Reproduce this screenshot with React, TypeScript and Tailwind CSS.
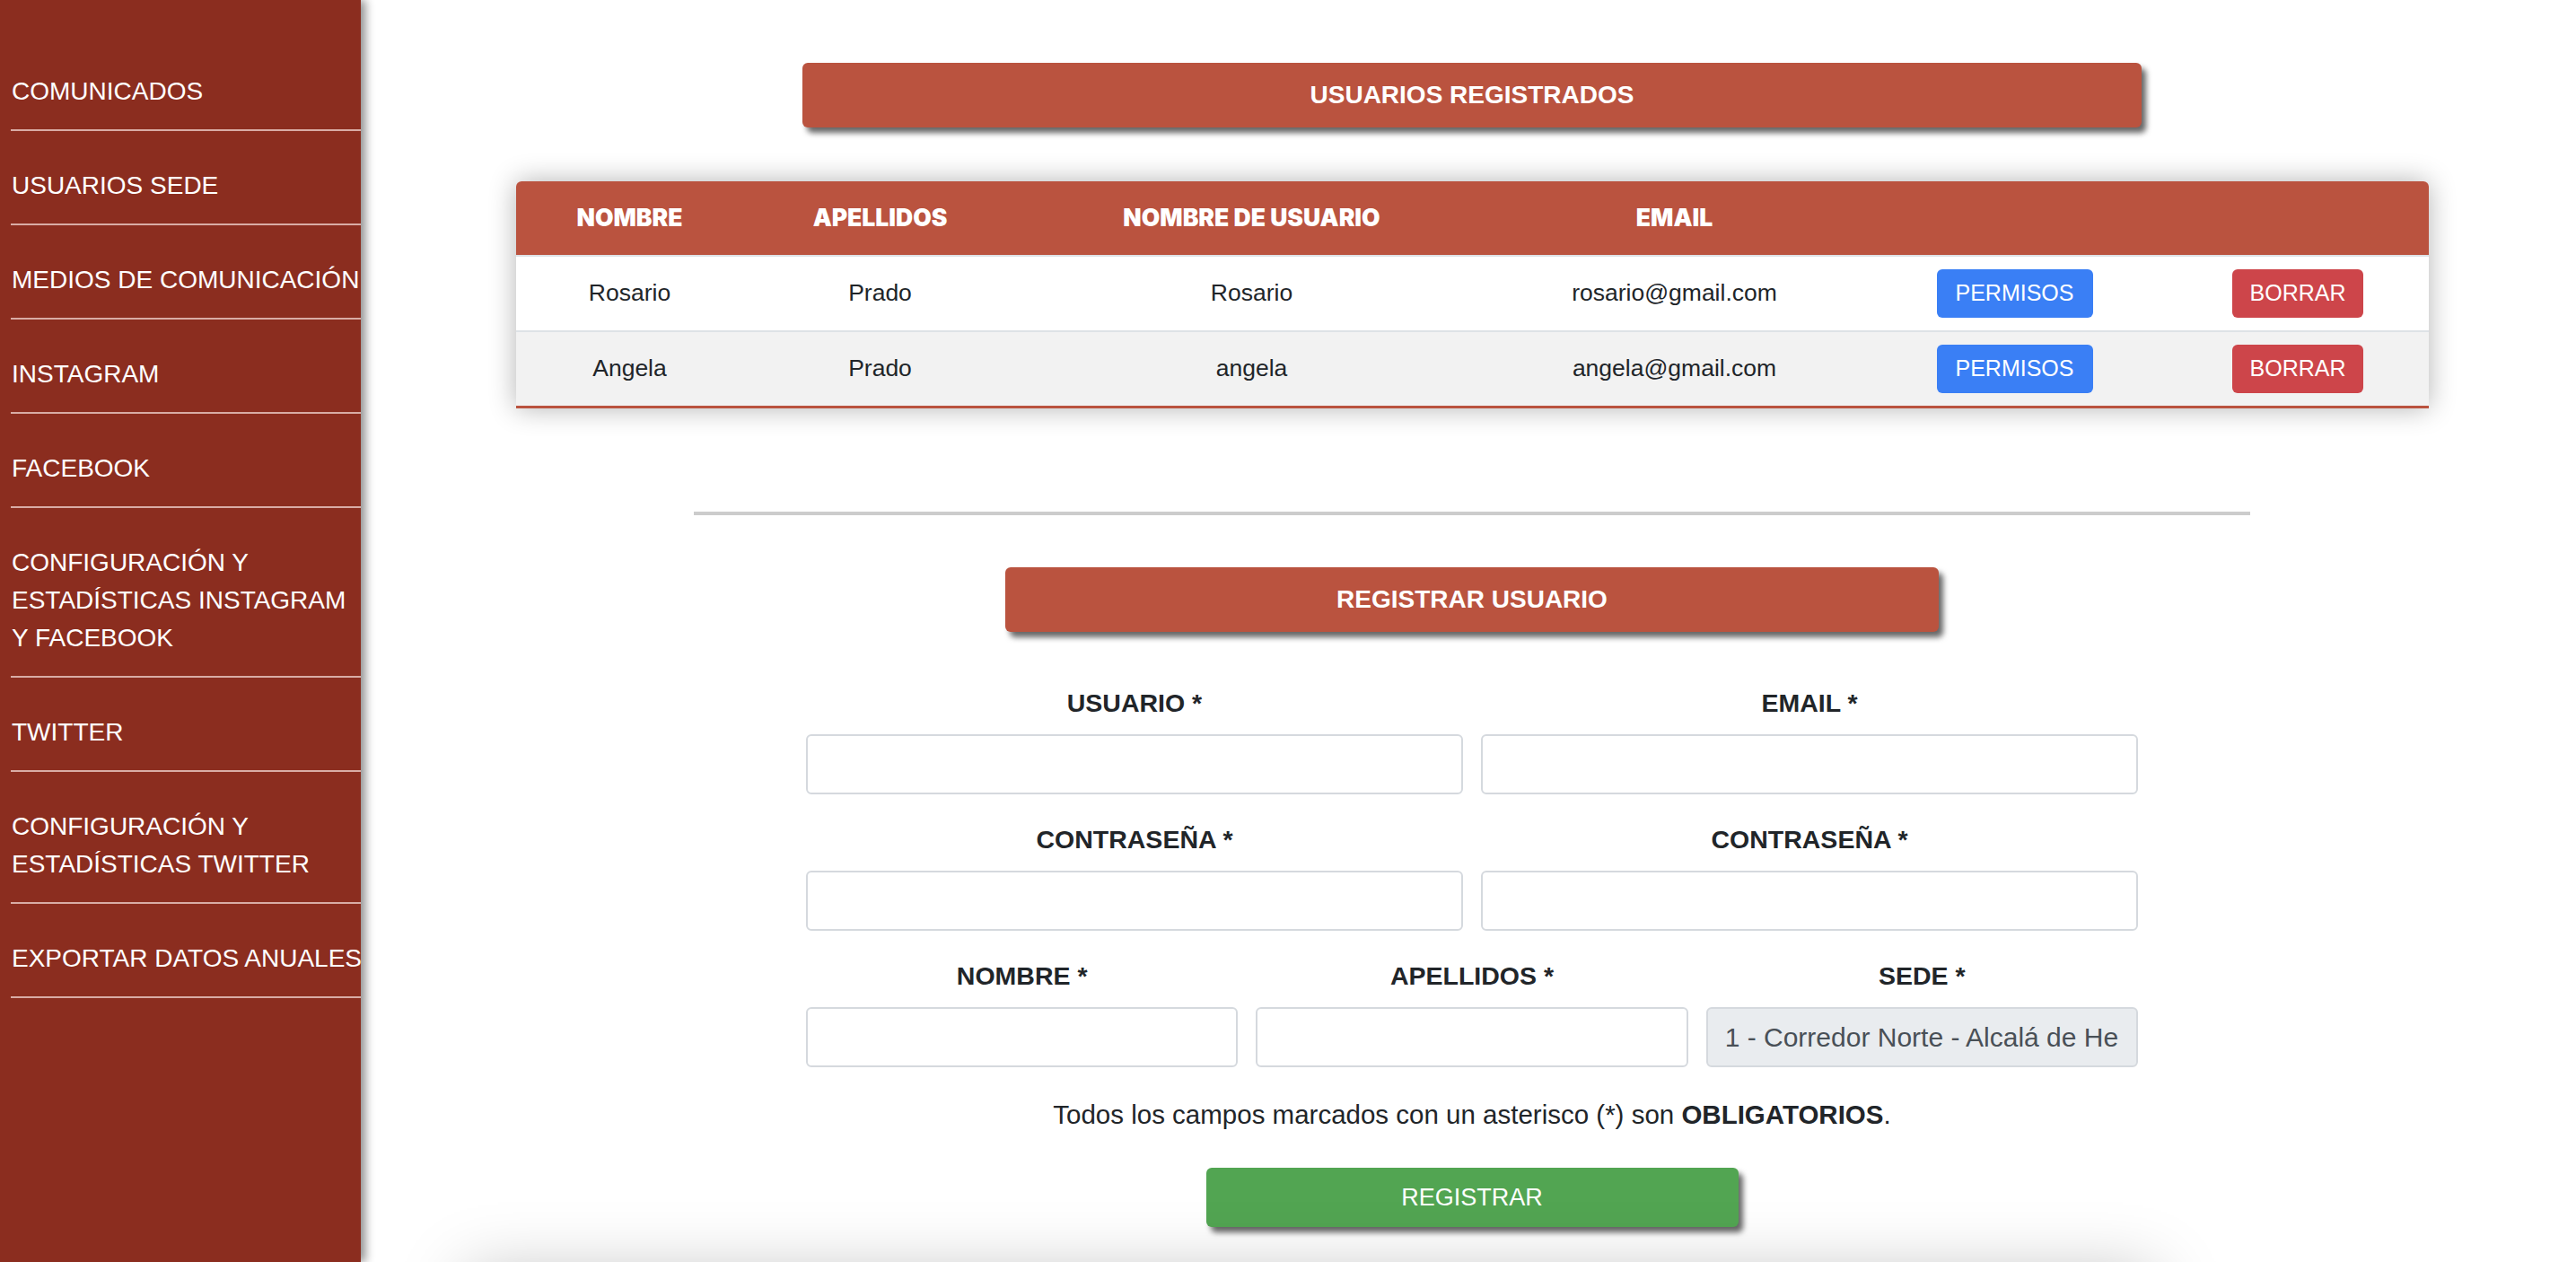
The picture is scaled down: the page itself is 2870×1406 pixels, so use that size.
import React from 'react'

const menu: string[][] = [
	['COMUNICADOS'],
	['USUARIOS SEDE'],
	['MEDIOS DE COMUNICACIÓN'],
	['INSTAGRAM'],
	['FACEBOOK'],
	['CONFIGURACIÓN Y', 'ESTADÍSTICAS INSTAGRAM', 'Y FACEBOOK'],
	['TWITTER'],
	['CONFIGURACIÓN Y', 'ESTADÍSTICAS TWITTER'],
	['EXPORTAR DATOS ANUALES'],
]

const users = [
	{ nombre: 'Rosario', apellidos: 'Prado', usuario: 'Rosario', email: 'rosario@gmail.com' },
	{ nombre: 'Angela', apellidos: 'Prado', usuario: 'angela', email: 'angela@gmail.com' },
]

const cols = 'grid grid-cols-[254px_304px_524px_418px_340px_291px] items-center text-center'

const Sidebar: React.FC = () => (
	<aside className="relative z-10 h-full w-[402px] shrink-0 bg-[#8b2d1f] pt-[41px] shadow-[5px_0_10px_rgba(0,0,0,0.45)]">
		<ul className="pl-[12px]">
			{menu.map((lines, i) => (
				<li
					key={i}
					className="border-b-2 border-[#d9aca5] pb-[21px] pl-[1px] pt-[40px] text-[28px] leading-[42px] text-white"
				>
					{lines.map((l) => (
						<div key={l} className="whitespace-nowrap">
							{l}
						</div>
					))}
				</li>
			))}
		</ul>
	</aside>
)

const TitleBar: React.FC<{ text: string; className?: string }> = ({ text, className }) => (
	<div
		className={`flex h-[72px] items-center justify-center rounded-[6px] bg-[#ba533f] text-[28px] font-bold text-white shadow-[5px_6px_6px_rgba(0,0,0,0.6)] ${className ?? ''}`}
	>
		{text}
	</div>
)

const Field: React.FC<{ label: string; children?: React.ReactNode }> = ({ label, children }) => (
	<div className="flex flex-col">
		<div className="mb-[15px] text-center text-[28.5px] font-bold leading-[40px] text-[#212529]">{label}</div>
		{children ?? <div className="h-[67px] rounded-[6px] border-2 border-[#d5d9de] bg-white" />}
	</div>
)

const UsersTable: React.FC = () => (
	<div className="mt-[60px] w-[2131px] rounded-t-[6px] border-b-[3px] border-[#ba533f] shadow-[0_0_30px_rgba(0,0,0,0.3)]">
		<div
			className={`${cols} h-[82px] rounded-t-[6px] bg-[#ba533f] font-['Inter',sans-serif] text-[26.5px] font-black text-white`}
		>
			<div>NOMBRE</div>
			<div>APELLIDOS</div>
			<div>NOMBRE DE USUARIO</div>
			<div>EMAIL</div>
			<div />
			<div />
		</div>
		{users.map((u, i) => (
			<div
				key={u.email}
				className={`${cols} h-[84px] border-t-2 border-[#dee2e6] text-[26.5px] text-[#212529] ${i % 2 ? 'bg-[#f2f2f2]' : 'bg-white'}`}
			>
				<div>{u.nombre}</div>
				<div>{u.apellidos}</div>
				<div>{u.usuario}</div>
				<div>{u.email}</div>
				<div className="flex justify-center">
					<button className="h-[54px] w-[174px] rounded-[6px] bg-[#3a7ff5] text-[25px] text-white">PERMISOS</button>
				</div>
				<div className="flex justify-center">
					<button className="h-[54px] w-[146px] rounded-[6px] bg-[#cd454a] text-[25px] text-white">BORRAR</button>
				</div>
			</div>
		))}
	</div>
)

export default function App() {
	return (
		<div className="flex h-[1406px] w-[2870px] overflow-hidden bg-white font-['Liberation_Sans',Arial,sans-serif]">
			<Sidebar />
			<main className="flex flex-1 flex-col items-center overflow-hidden pl-2 pt-[70px]">
				<TitleBar text="USUARIOS REGISTRADOS" className="w-[1492px] shrink-0" />
				<UsersTable />

				<div className="mt-[115px] h-[4px] w-[1734px] shrink-0 bg-[#cccccc]" />

				<TitleBar text="REGISTRAR USUARIO" className="mt-[58px] w-[1040px] shrink-0" />

				<form className="mt-[59px] flex w-[1484px] flex-col">
					<div className="grid grid-cols-2 gap-x-[20px]">
						<Field label="USUARIO *" />
						<Field label="EMAIL *" />
					</div>
					<div className="mt-[30px] grid grid-cols-2 gap-x-[20px]">
						<Field label="CONTRASEÑA *" />
						<Field label="CONTRASEÑA *" />
					</div>
					<div className="mt-[30px] grid grid-cols-3 gap-x-[20px]">
						<Field label="NOMBRE *" />
						<Field label="APELLIDOS *" />
						<Field label="SEDE *">
							<div className="flex h-[67px] items-center overflow-hidden whitespace-nowrap rounded-[6px] border-2 border-[#d5d9de] bg-[#e9ecef] pl-[19px] text-[30px] text-[#495057]">
								1 - Corredor Norte - Alcalá de He
							</div>
						</Field>
					</div>
				</form>

				<p className="mt-[32px] text-center text-[29.5px] leading-[42px] text-[#212529]">
					Todos los campos marcados con un asterisco (*) son <b>OBLIGATORIOS</b>.
				</p>

				<button className="mt-[38px] h-[66px] w-[593px] shrink-0 rounded-[6px] bg-[#52a552] text-[27px] text-white shadow-[5px_6px_6px_rgba(0,0,0,0.6)]">
					REGISTRAR
				</button>

				<div className="mt-[52px] ml-[110px] h-[300px] w-[1880px] shrink-0 self-start bg-white shadow-[0_0_70px_rgba(0,0,0,0.25)]" />
			</main>
		</div>
	)
}
